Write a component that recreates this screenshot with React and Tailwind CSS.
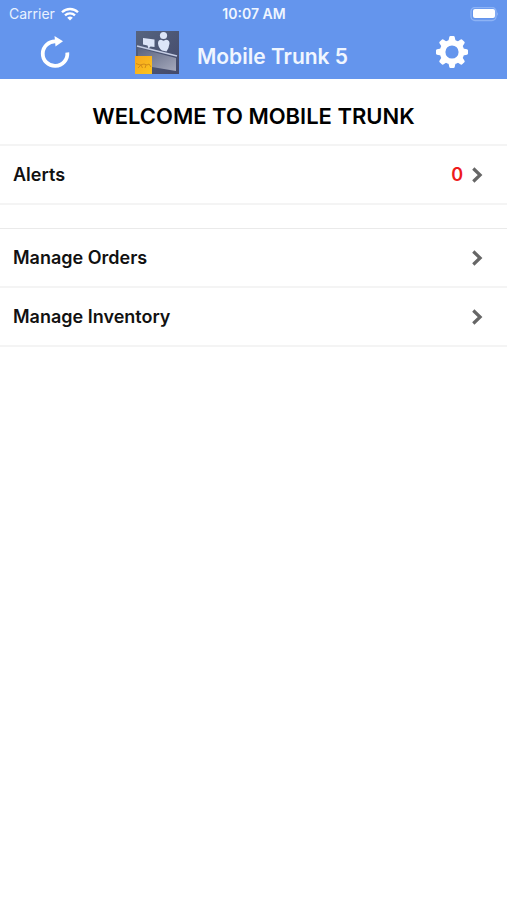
function WifiIcon() {
  return (
    <svg aria-hidden="true" viewBox="0 0 18 14" className="h-3.5 w-[18px]" fill="none" stroke="white" strokeWidth="2.3">
      <path d="M1 5.3a11.4 11.4 0 0 1 16 0" />
      <path d="M4 8.3a7.2 7.2 0 0 1 10 0" />
      <path d="M9 13.6 6.2 10.8a4 4 0 0 1 5.6 0Z" fill="white" stroke="none" />
    </svg>
  );
}

function BatteryIcon() {
  return (
    <svg aria-hidden="true" viewBox="0 0 30 15" className="h-[15px] w-[30px]">
      <rect x="2" y="0.5" width="25" height="13" rx="4" fill="none" stroke="#8db3f5" strokeWidth="1.4" />
      <rect x="4" y="2" width="22" height="9" rx="2" fill="white" />
      <path d="M28.3 5q1.5 2 0 4Z" fill="#a3c3f8" />
    </svg>
  );
}

function RefreshIcon() {
  return (
    <svg aria-hidden="true" viewBox="0 0 32 34" className="h-[34px] w-8" fill="none">
      <path d="M28.3 17.5A12.3 12.3 0 1 1 17 6.4" stroke="white" strokeWidth="3.8" />
      <path d="M15.5 1 24 6.3 16.5 11.4Z" fill="white" />
    </svg>
  );
}

function GearIcon() {
  const teeth = [0, 45, 90, 135, 180, 225, 270, 315];
  return (
    <svg aria-hidden="true" viewBox="-16 -16 32 32" className="size-8">
      <circle r="9.4" fill="none" stroke="white" strokeWidth="5.6" />
      {teeth.map((angle) => (
        <path
          key={angle}
          d="M-3.6-11-2.7-15Q-2.5-16-1.5-16H1.5Q2.5-16 2.7-15L3.6-11Z"
          fill="white"
          transform={`rotate(${angle})`}
        />
      ))}
    </svg>
  );
}

function TrunkLogo() {
  return (
    <svg aria-hidden="true" viewBox="0 0 44 44" className="size-11">
      <defs>
        <linearGradient id="logo-back" x1="0" y1="0" x2="1" y2="1">
          <stop offset="0" stopColor="#56647f" />
          <stop offset="1" stopColor="#43496a" />
        </linearGradient>
        <linearGradient id="logo-desk" x1="0" y1="0" x2="1" y2="1">
          <stop offset="0" stopColor="#59627e" />
          <stop offset="1" stopColor="#a5a9bc" />
        </linearGradient>
        <linearGradient id="logo-badge" x1="0" y1="0" x2="1" y2="1">
          <stop offset="0" stopColor="#f7a51c" />
          <stop offset="1" stopColor="#fbc51f" />
        </linearGradient>
      </defs>
      <rect x="1" y="1" width="43" height="43" fill="url(#logo-back)" />
      <path d="M3 18 41 28V41L17 37V26H3Z" fill="url(#logo-desk)" />
      <path d="M2 16 42 26" stroke="#c5cde4" strokeWidth="1.6" />
      <path d="M8 8 19.5 9.5V17L15.5 16.5 13.5 18.5 12.5 15.5 8 14.5Z" fill="#dce5f8" />
      <circle cx="28.5" cy="5.5" r="3.6" fill="#dce5f8" />
      <path d="M23 13.5Q23 9.8 26 9.8L28.5 10.8 31 9.8Q34.5 9.8 34.5 13.5 34 18 31.5 21.5L27 20.5Q23.5 18 23 13.5Z" fill="#dce5f8" />
      <rect x="0" y="26" width="17" height="18" fill="url(#logo-badge)" />
      <path d="M1 33.5 5 35 9 34 12 35 14 34 16 37M3 38 6 35 7.5 38M10 38 11 35" stroke="#d38c18" strokeWidth="1" fill="none" />
    </svg>
  );
}

function Chevron() {
  return (
    <svg aria-hidden="true" viewBox="0 0 12 16" className="h-4 w-3" fill="none" stroke="#666666" strokeWidth="3.2">
      <path d="M2.3 1.5 9.1 8 2.3 14.5" />
    </svg>
  );
}

function MenuRow({ label, count }) {
  return (
    <button type="button" className="flex h-[57px] w-full items-center pr-6 pl-[13px] text-left">
      <span className="flex-1 text-lg font-semibold text-[#111111]">{label}</span>
      {count !== undefined && <span className="mr-2 text-lg font-semibold text-[#ee1b1b]">{count}</span>}
      <Chevron />
    </button>
  );
}

export default function App() {
  return (
    <div className="min-h-screen bg-white font-['Inter',sans-serif] text-black">
      <header className="bg-[#6495ed] text-white">
        <div className="grid h-7 grid-cols-3 items-center pr-2 pl-[9px] text-sm">
          <div className="flex items-center gap-1.5 text-[#e9f2ff]">
            <span>Carrier</span>
            <WifiIcon />
          </div>
          <span className="text-center font-semibold text-[#f0f6ff]">10:07 AM</span>
          <div className="flex justify-end">
            <BatteryIcon />
          </div>
        </div>
        <div className="flex h-[51px] items-center px-[39px] pb-1">
          <button type="button" aria-label="Refresh">
            <RefreshIcon />
          </button>
          <div className="flex flex-1 items-center justify-center gap-[18px] pr-6">
            <TrunkLogo />
            <h2 className="pt-2.5 text-[21px] leading-7 font-semibold text-[#f0f6ff]">Mobile Trunk 5</h2>
          </div>
          <button type="button" aria-label="Settings">
            <GearIcon />
          </button>
        </div>
      </header>
      <main>
        <h1 className="pt-[23px] pb-3.5 text-center text-[22px] leading-7 font-semibold">WELCOME TO MOBILE TRUNK</h1>
        <section className="border-y-2 border-[#f4f4f4]">
          <MenuRow label="Alerts" count={0} />
        </section>
        <nav className="mt-[23px] border-t border-[#eaeaea]">
          <ul>
            <li className="border-b-2 border-[#f4f4f4]">
              <MenuRow label="Manage Orders" />
            </li>
            <li className="border-b-2 border-[#f4f4f4]">
              <MenuRow label="Manage Inventory" />
            </li>
          </ul>
        </nav>
      </main>
    </div>
  );
}
